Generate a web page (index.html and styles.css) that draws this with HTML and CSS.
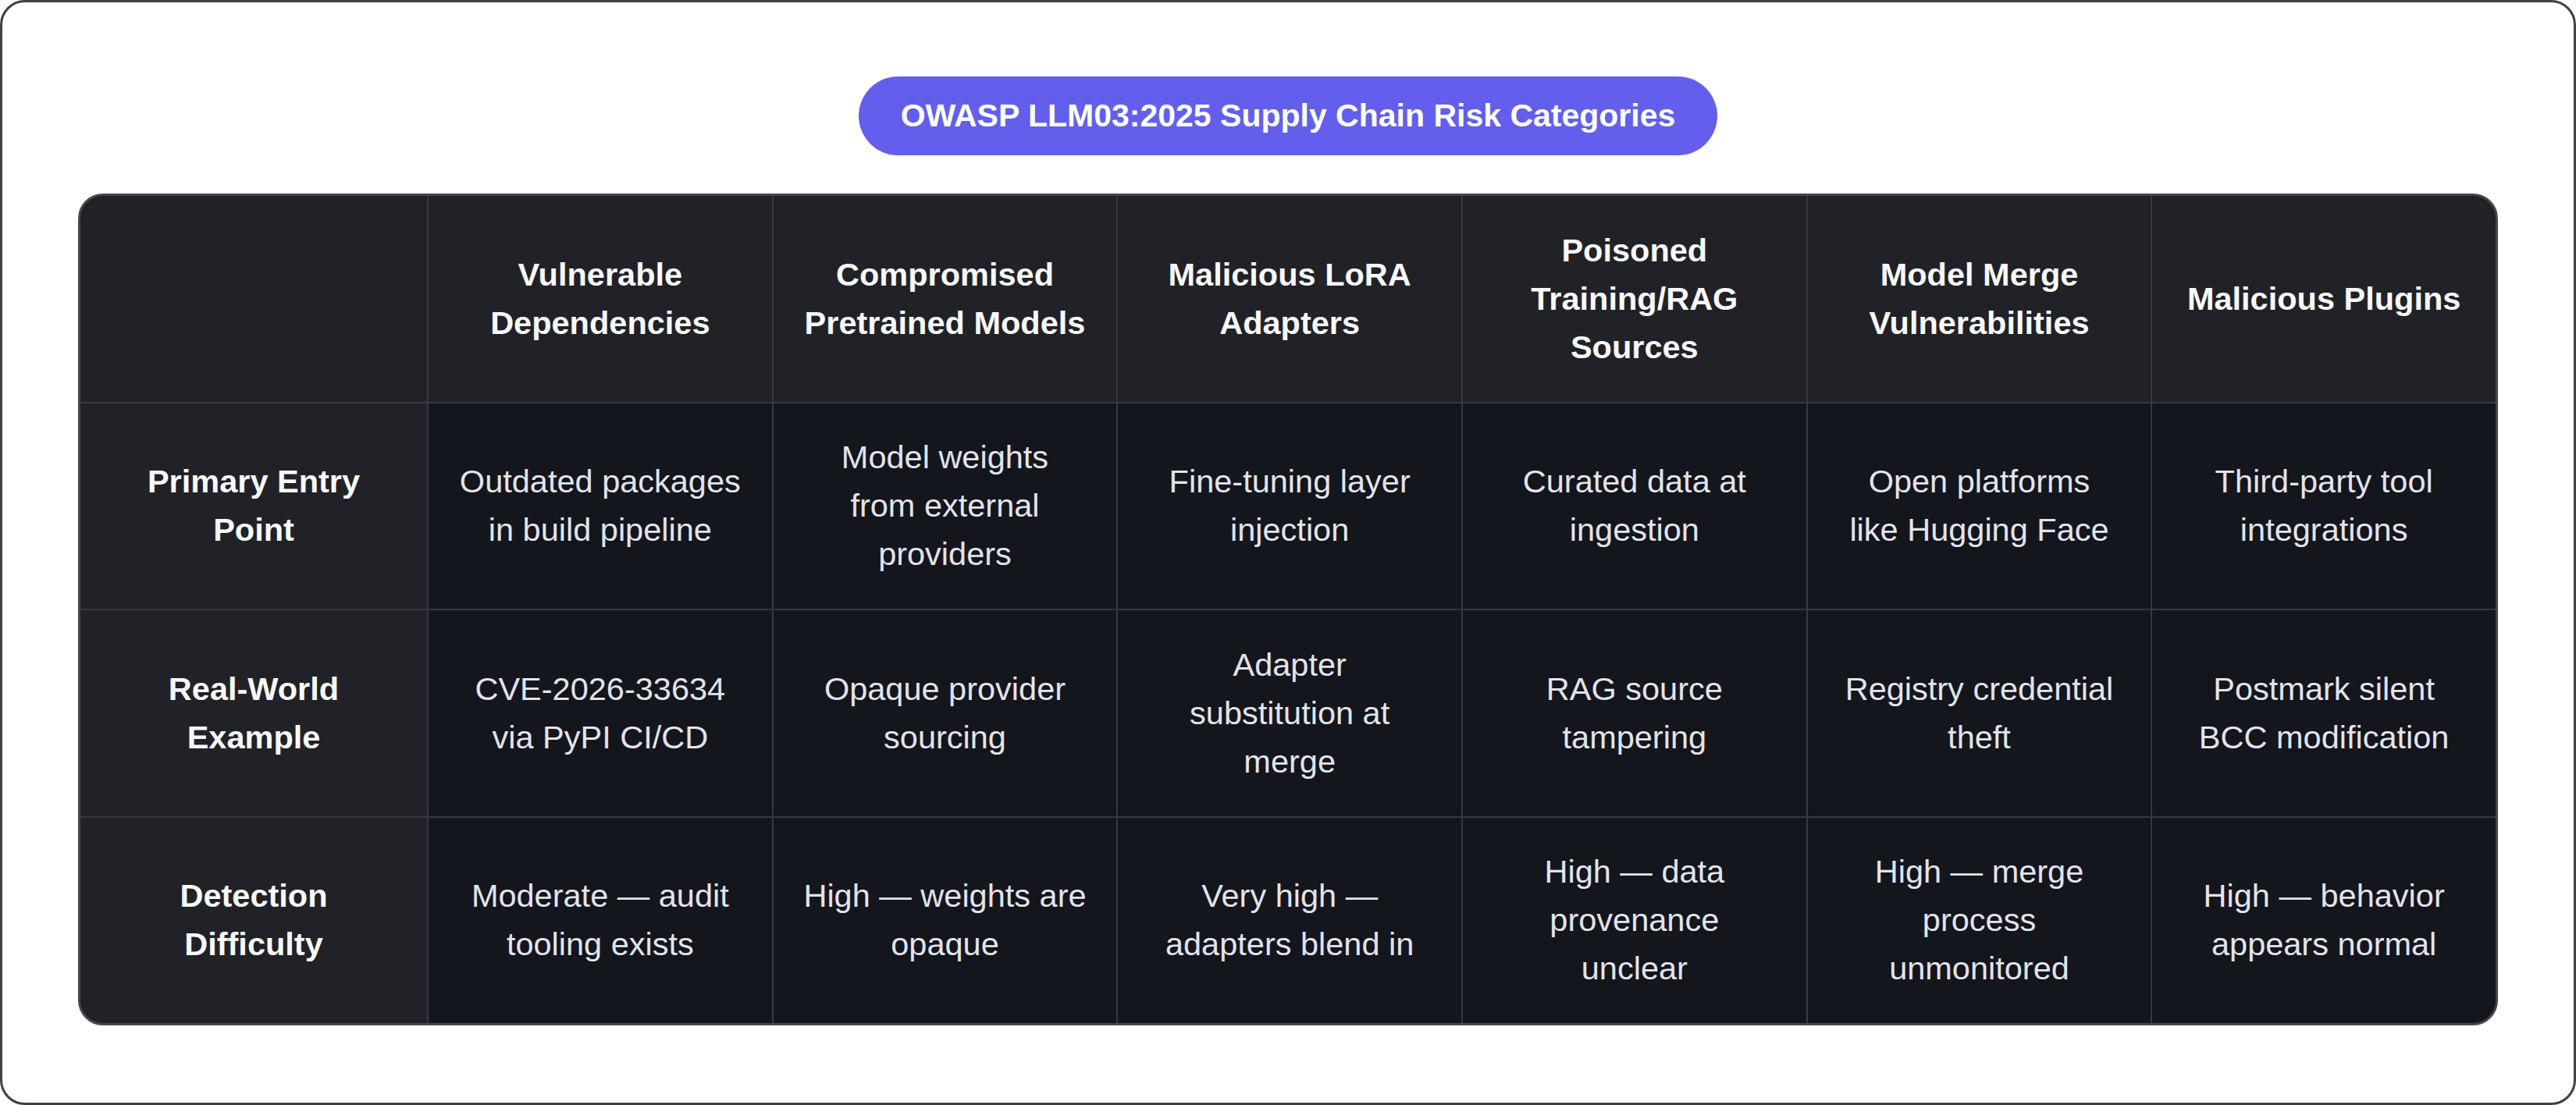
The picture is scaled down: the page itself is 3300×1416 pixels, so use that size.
FILE: index.html
```html
<!DOCTYPE html>
<html lang="en">
<head>
    <meta charset="UTF-8">
    <meta name="viewport" content="width=device-width, initial-scale=1.0">
    <title>OWASP LLM03:2025 Supply Chain Risk Categories</title>
    <link rel="stylesheet" href="styles.css">
</head>
<body>
    <div class="frame">
        <div class="title-row">
            <h1 class="title-pill">OWASP LLM03:2025 Supply Chain Risk Categories</h1>
        </div>

        <div class="risk-table">
            <!-- header row -->
            <div class="cell head corner"></div>
            <div class="cell head">Vulnerable<br>Dependencies</div>
            <div class="cell head">Compromised<br>Pretrained Models</div>
            <div class="cell head">Malicious LoRA<br>Adapters</div>
            <div class="cell head">Poisoned<br>Training/RAG<br>Sources</div>
            <div class="cell head">Model Merge<br>Vulnerabilities</div>
            <div class="cell head">Malicious Plugins</div>

            <!-- entry point -->
            <div class="cell label">Primary Entry<br>Point</div>
            <div class="cell">Outdated packages<br>in build pipeline</div>
            <div class="cell">Model weights<br>from external<br>providers</div>
            <div class="cell">Fine-tuning layer<br>injection</div>
            <div class="cell">Curated data at<br>ingestion</div>
            <div class="cell">Open platforms<br>like Hugging Face</div>
            <div class="cell">Third-party tool<br>integrations</div>

            <!-- examples -->
            <div class="cell label">Real-World<br>Example</div>
            <div class="cell">CVE-2026-33634<br>via PyPI CI/CD</div>
            <div class="cell">Opaque provider<br>sourcing</div>
            <div class="cell">Adapter<br>substitution at<br>merge</div>
            <div class="cell">RAG source<br>tampering</div>
            <div class="cell">Registry credential<br>theft</div>
            <div class="cell">Postmark silent<br>BCC modification</div>

            <!-- detection -->
            <div class="cell label">Detection<br>Difficulty</div>
            <div class="cell">Moderate — audit<br>tooling exists</div>
            <div class="cell">High — weights are<br>opaque</div>
            <div class="cell">Very high —<br>adapters blend in</div>
            <div class="cell">High — data<br>provenance<br>unclear</div>
            <div class="cell">High — merge<br>process<br>unmonitored</div>
            <div class="cell">High — behavior<br>appears normal</div>
        </div>
    </div>
</body>
</html>
```

FILE: styles.css
```css
:root {
    --pill: #635fec;
    --head-bg: #212227;
    --body-bg: #14161d;
    --line: #38393f;
    --frame-line: #3f3f46;
    --head-text: #f8f9fb;
    --body-text: #e2e4ec;
}

body {
    margin: 0;
    padding: 0;
    background: #ffffff;
    font-family: 'Liberation Sans', Arial, sans-serif;
}

.frame {
    width: 3300px;
    height: 1416px;
    box-sizing: border-box;
    border: 3px solid var(--frame-line);
    border-radius: 32px;
    background: #ffffff;
    padding-top: 95px;
    display: flex;
    flex-direction: column;
    align-items: center;
}

.title-row {
    display: flex;
    justify-content: center;
}

.title-pill {
    margin: 0;
    width: 1100px;
    height: 101px;
    box-sizing: border-box;
    background: var(--pill);
    color: #ffffff;
    border-radius: 51px;
    font-size: 41px;
    font-weight: 700;
    line-height: 101px;
    text-align: center;
    white-space: nowrap;
}

.risk-table {
    margin-top: 49px;
    width: 3100px;
    height: 1066px;
    box-sizing: border-box;
    border: 3px solid #46474c;
    border-radius: 32px;
    overflow: hidden;
    background: var(--line);
    display: grid;
    grid-template-columns: 444px repeat(6, 1fr);
    grid-template-rows: repeat(4, 1fr);
    gap: 2px;
}

.cell {
    background: var(--body-bg);
    color: var(--body-text);
    font-size: 41.5px;
    line-height: 62px;
    text-align: center;
    display: flex;
    align-items: center;
    justify-content: center;
    padding: 0 12px;
    white-space: nowrap;
}

.cell.head,
.cell.label {
    background: var(--head-bg);
    color: var(--head-text);
    font-weight: 700;
}
```
